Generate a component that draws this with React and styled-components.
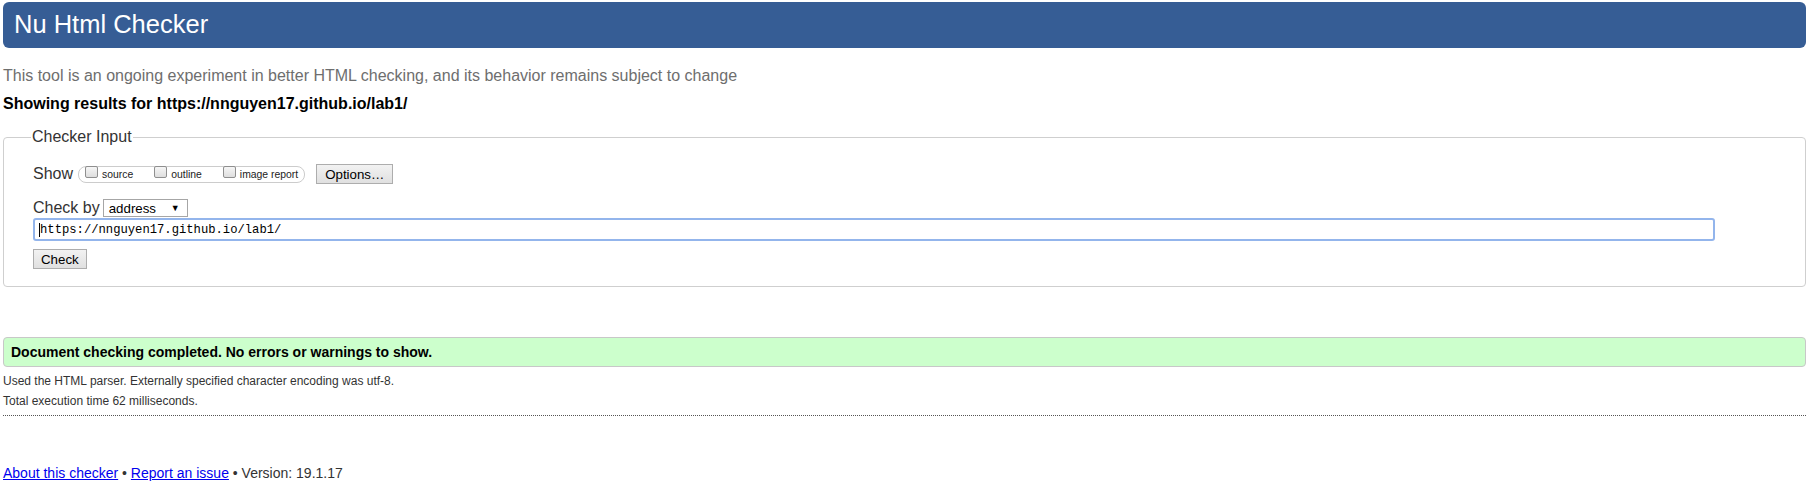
import React from "react";
import styled, { createGlobalStyle } from "styled-components";

const GlobalStyle = createGlobalStyle`
  html, body {
    margin: 0;
    padding: 0;
    background: #fff;
    font-family: "Liberation Sans", Arial, sans-serif;
    color: #000;
  }
`;

const Page = styled.div`
  padding: 2px 6px 0 3px;
`;

const Header = styled.header`
  height: 46px;
  background: #365d95;
  border-radius: 6px;
  display: flex;
  align-items: center;
  padding-left: 11px;
  box-sizing: border-box;

  h1 {
    margin: 0;
    color: #fff;
    font-weight: normal;
    font-size: 25.5px;
    line-height: 1;
  }
`;

const Intro = styled.p`
  margin: 19px 0 0;
  font-size: 16px;
  line-height: 18px;
  color: #6e6e6e;
`;

const Results = styled.p`
  margin: 10px 0 0;
  font-size: 16px;
  line-height: 18px;
  font-weight: bold;
  color: #000;
`;

const Fieldset = styled.fieldset`
  margin: 15px 0 0;
  padding: 0 28px 17px 29px;
  border: 1px solid #cfcfcf;
  border-radius: 4px;

  legend {
    font-size: 16px;
    line-height: 18px;
    color: #333;
    padding: 0 1px;
    margin-left: -2px;
  }
`;

const Row = styled.div`
  display: flex;
  align-items: center;
  height: ${(p) => p.$h || 20}px;
  margin-top: ${(p) => p.$mt || 0}px;
`;

const Label = styled.span`
  font-size: 16px;
  color: #333;
  margin-right: ${(p) => p.$mr || 4}px;
`;

const Group = styled.div`
  display: flex;
  align-items: center;
  height: 17px;
  box-sizing: border-box;
  border: 1px solid #cccccc;
  border-radius: 8px;
  padding: 0 6px 0 6px;
  margin-right: 11px;
`;

const Check = styled.label`
  display: flex;
  align-items: center;
  font-size: 10.4px;
  color: #222;
  margin-right: ${(p) => (p.$last ? 0 : 21)}px;
`;

const Box = styled.span`
  width: 13px;
  height: 12px;
  box-sizing: border-box;
  border: 1px solid #8f8f8f;
  border-radius: 2px;
  background: linear-gradient(#f6f6f6, #dedede);
  margin-right: 4px;
  margin-top: -5px;
`;

const Button = styled.button`
  height: 20px;
  padding: 0 ${(p) => p.$px || 8}px;
  font-family: "Liberation Sans", Arial, sans-serif;
  font-size: 13.3px;
  color: #000;
  background: linear-gradient(#f2f2f2, #e0e0e0);
  border: 1px solid #adadad;
  border-radius: 0;
  margin-top: ${(p) => p.$mt || 0}px;
  display: block;
`;

const Select = styled.div`
  width: 85px;
  height: 18px;
  box-sizing: border-box;
  border: 1px solid #a6a6a6;
  background: #fff;
  display: flex;
  align-items: center;
  justify-content: space-between;
  padding: 0 7px 0 5px;
  font-size: 13.3px;
  color: #000;

  span {
    font-size: 9px;
  }
`;

const UrlInput = styled.div`
  margin-top: 1px;
  width: 1682px;
  height: 23px;
  box-sizing: border-box;
  border: 2px solid #93b5ec;
  border-radius: 3px;
  display: flex;
  align-items: center;
  padding-left: 4px;
  font-family: "Liberation Mono", Consolas, monospace;
  font-size: 12.2px;
  color: #000;
`;

const Caret = styled.span`
  width: 1px;
  height: 14px;
  background: #000;
`;

const Success = styled.div`
  margin-top: 50px;
  height: 30px;
  box-sizing: border-box;
  background: #ccffcc;
  border: 1px solid #c8c8c8;
  border-radius: 4px;
  display: flex;
  align-items: center;
  padding-left: 7px;
  font-size: 14px;
  font-weight: bold;
  color: #000;
`;

const Details = styled.div`
  margin-top: 4px;
  font-size: 12px;
  line-height: 20px;
  color: #333;
  padding-bottom: 4px;
  border-bottom: 1px dotted #555;
`;

const Footer = styled.p`
  margin: 48px 0 0;
  font-size: 14px;
  line-height: 18px;
  color: #333;

  a {
    color: #0000ee;
    text-decoration: underline;
  }
`;

export default function App() {
  return (
    <Page>
      <GlobalStyle />
      <Header>
        <h1>Nu Html Checker</h1>
      </Header>
      <Intro>
        This tool is an ongoing experiment in better HTML checking, and its
        behavior remains subject to change
      </Intro>
      <Results>Showing results for https://nnguyen17.github.io/lab1/</Results>
      <Fieldset>
        <legend>Checker Input</legend>
        <Row $mt={18}>
          <Label $mr={5}>Show</Label>
          <Group>
            <Check>
              <Box />
              source
            </Check>
            <Check>
              <Box />
              outline
            </Check>
            <Check $last>
              <Box />
              image report
            </Check>
          </Group>
          <Button>Options…</Button>
        </Row>
        <Row $mt={15} $h={18}>
          <Label $mr={3}>Check by</Label>
          <Select>
            address
            <span>▼</span>
          </Select>
        </Row>
        <UrlInput>
          <Caret />
          https://nnguyen17.github.io/lab1/
        </UrlInput>
        <Button $mt={8} $px={7}>
          Check
        </Button>
      </Fieldset>
      <Success>Document checking completed. No errors or warnings to show.</Success>
      <Details>
        Used the HTML parser. Externally specified character encoding was utf-8.
        <br />
        Total execution time 62 milliseconds.
      </Details>
      <Footer>
        <a href="#about">About this checker</a> • <a href="#issue">Report an issue</a> •
        Version: 19.1.17
      </Footer>
    </Page>
  );
}
